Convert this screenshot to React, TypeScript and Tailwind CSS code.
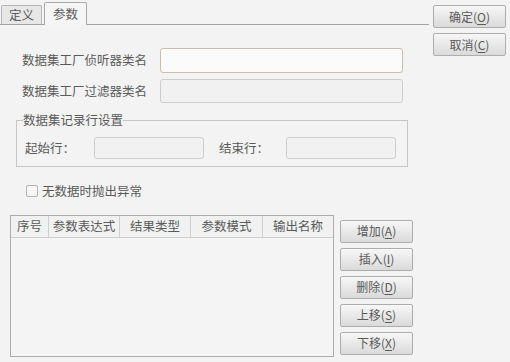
import type { ReactNode } from 'react';

const font = { fontFamily: '"Noto Sans CJK SC", "Noto Sans", sans-serif' };

function Btn({ label, hotkey, className = '' }: { label: string; hotkey: string; className?: string }) {
  return (
    <button
      className={`flex h-[23px] w-[73px] items-center justify-center rounded-[2px] border border-[#adadad] bg-gradient-to-b from-[#f7f7f7] to-[#dadada] text-[12px] leading-none text-[#5a5a5a] ${className}`}
    >
      {label}(<span className="underline underline-offset-2">{hotkey}</span>)
    </button>
  );
}

function Field({ className = '' }: { className?: string }) {
  return <div className={`rounded-[3px] border border-[#cdcdcd] bg-[#f0f1f0] ${className}`} />;
}

function HeadCell({ children, w, last }: { children: ReactNode; w: string; last?: boolean }) {
  return (
    <div className={`flex items-center justify-center ${w} ${last ? '' : 'border-r border-[#cfcfcf]'}`}>
      {children}
    </div>
  );
}

export default function App() {
  return (
    <div style={font} className="flex h-[362px] w-[510px] bg-[#f2f3f2] text-[12.5px] text-[#5a5a5a]">
      {/* Left: tab control */}
      <div className="flex w-[429px] flex-col pt-[1px]">
        <div className="flex h-[23px] items-end pl-[1px]">
          <div className="flex h-[19px] w-[41px] items-center justify-center rounded-t-[2px] border border-b-0 border-[#b4b4b4] bg-[#e6e7e6] leading-none">
            定义
          </div>
          <div className="relative z-10 -mb-px ml-[2px] flex h-[23px] w-[43px] items-center justify-center rounded-t-[2px] border border-b-0 border-[#a9a9a9] bg-[#f4f5f4] leading-none">
            参数
          </div>
        </div>

        <div className="flex-1 border-t border-[#a3a3a3] pt-[23px]">
          {/* Class name rows */}
          <div className="flex items-center pl-[22px]">
            <span className="w-[138px] leading-none">数据集工厂侦听器类名</span>
            <div className="h-[25px] w-[243px] rounded-[3px] border border-[#cbbcae] bg-[#fafbfa]" />
          </div>
          <div className="mt-[6px] flex items-center pl-[22px]">
            <span className="w-[138px] leading-none">数据集工厂过滤器类名</span>
            <Field className="h-[24px] w-[243px]" />
          </div>

          {/* Row settings group */}
          <fieldset className="mx-0 ml-[16px] mt-[9px] w-[392px] border border-[#c6c6c6] px-[8px] pb-[7px] pt-[9px]">
            <legend className="-ml-[2px] px-0 leading-[16px]">数据集记录行设置</legend>
            <div className="flex items-center">
              <span className="w-[69px] leading-none">起始行：</span>
              <Field className="h-[22px] w-[110px]" />
              <span className="ml-[15px] w-[67px] leading-none">结束行：</span>
              <Field className="h-[22px] w-[110px]" />
            </div>
          </fieldset>

          {/* Checkbox */}
          <div className="ml-[26px] mt-[18px] flex items-center">
            <div className="h-[12px] w-[12px] rounded-[2px] border border-[#b2b2b2] bg-[#f7f7f7]" />
            <span className="ml-[4px] leading-none">无数据时抛出异常</span>
          </div>

          {/* Parameter table + buttons */}
          <div className="ml-[10px] mt-[17px] flex">
            <div className="flex h-[142px] w-[324px] flex-col border border-[#acacac]">
              <div className="flex h-[22px] border-b border-[#cdcdcd] bg-[#f0f1f0] leading-none">
                <HeadCell w="w-[38px]">序号</HeadCell>
                <HeadCell w="w-[71px]">参数表达式</HeadCell>
                <HeadCell w="w-[71px]">结果类型</HeadCell>
                <HeadCell w="w-[72px]">参数模式</HeadCell>
                <HeadCell w="flex-1" last>输出名称</HeadCell>
              </div>
              <div className="flex-1 bg-[#f3f4f3]" />
            </div>
            <div className="ml-[6px] flex flex-col gap-[5px] pt-[5px]">
              <Btn label="增加" hotkey="A" />
              <Btn label="插入" hotkey="I" />
              <Btn label="删除" hotkey="D" />
              <Btn label="上移" hotkey="S" />
              <Btn label="下移" hotkey="X" />
            </div>
          </div>
        </div>
      </div>

      {/* Right: dialog buttons */}
      <div className="flex flex-col gap-[5px] pl-[4px] pt-[5px]">
        <Btn label="确定" hotkey="O" className="h-[22px] w-[72px]" />
        <Btn label="取消" hotkey="C" className="h-[22px] w-[72px]" />
      </div>
    </div>
  );
}
